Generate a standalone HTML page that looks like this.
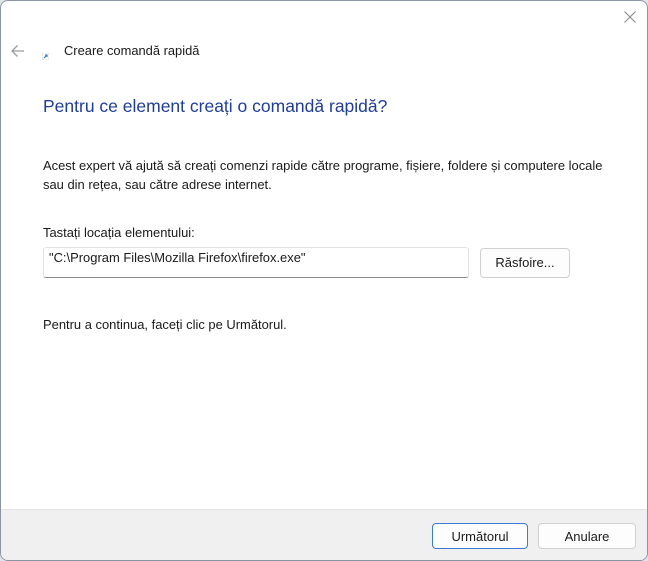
<!DOCTYPE html>
<html><head><meta charset="utf-8"><style>
html,body{margin:0;padding:0;width:648px;height:561px;overflow:hidden;background:#dfe3ea;}
.win{position:absolute;left:0px;top:0px;width:646px;height:559px;background:#fff;border:1px solid #8a96a6;border-radius:8px;overflow:hidden;font-family:"Liberation Sans","Noto Sans CJK JP",sans-serif;color:#1a1a1a;font-size:13px;}
.abs{position:absolute;white-space:nowrap;}
.footer{position:absolute;left:0;right:0;top:508px;bottom:0;background:#f0f0f0;border-top:1px solid #e3e3e3;}
.btn{position:absolute;height:25px;border:1px solid #d0d0d0;border-radius:4px;background:#fdfdfd;text-align:center;line-height:25px;font-size:13px;}
</style></head><body>
<div class="win">
<svg class="abs" style="left:622px;top:9px" width="14" height="14" viewBox="0 0 14 14"><path d="M1.5 1.5L12.5 12.5M12.5 1.5L1.5 12.5" stroke="#8a8a8a" stroke-width="1.1"/></svg>
<svg class="abs" style="left:9px;top:43px" width="16" height="14" viewBox="0 0 16 14"><path d="M14 7H2M7.5 1.5L2 7l5.5 5.5" stroke="#9a9a9a" stroke-width="1.3" fill="none"/></svg>
<svg class="abs" style="left:41px;top:52px" width="7" height="7" viewBox="0 0 7 7"><rect width="7" height="7" fill="#fff" stroke="#ccc" stroke-width=".6"/><path d="M2 5L5 2M3 2h2v2" stroke="#2a7ad0" stroke-width="1.1" fill="none"/></svg>
<div class="abs" style="left:63px;top:42px;font-size:12.9px">Creare comandă rapidă</div>
<div class="abs" style="left:42px;top:95px;font-size:17.5px;color:#1f3d99">Pentru ce element creați o comandă rapidă?</div>
<div class="abs" style="left:42px;top:155px;line-height:19px;font-size:12.95px">Acest expert vă ajută să creați comenzi rapide către programe, fișiere, foldere și computere locale<br>sau din rețea, sau către adrese internet.</div>
<div class="abs" style="left:42px;top:224px;font-size:12.95px">Tastați locația elementului:</div>
<div class="abs" style="left:42px;top:246px;width:426px;height:31px;border:1px solid #e2e2e2;border-bottom:1px solid #8a8a8a;box-sizing:border-box;border-radius:3px;"></div>
<div class="abs" style="left:48px;top:249px;font-size:12.95px">"C:\Program Files\Mozilla Firefox\firefox.exe"</div>
<div class="btn abs" style="left:479px;top:247px;width:88px;height:28px;line-height:28px;">Răsfoire...</div>
<div class="abs" style="left:42px;top:316px;font-size:12.95px">Pentru a continua, faceți clic pe Următorul.</div>
<div class="footer"></div>
<div class="btn abs" style="left:431px;top:522px;width:94px;height:24px;border:1px solid #3a7bd5;">Următorul</div>
<div class="btn abs" style="left:537px;top:522px;width:96px;height:24px;">Anulare</div>
</div>
</body></html>
